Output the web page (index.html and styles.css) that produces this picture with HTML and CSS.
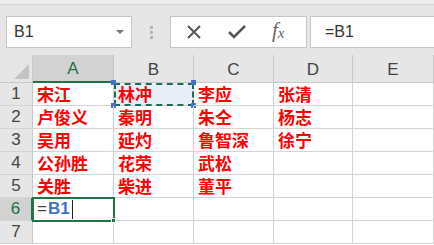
FILE: index.html
```html
<!DOCTYPE html>
<html>
<head>
 <meta charset="utf-8" />
 <title>Sheet</title>
 <link rel="stylesheet" href="styles.css">
</head>
<body>
 <div class="toolbar">
  <div class="namebox">
   <span>B1</span>
   <span class="drop"></span>
  </div>
  <div class="grip"><i></i><i></i><i></i></div>
  <div class="buttons">
   <svg class="icon" width="18" height="18" viewBox="0 0 18 18"><path d="M3 3 L15 15 M15 3 L3 15" stroke="#555" stroke-width="2" fill="none"/></svg>
   <svg class="icon" width="20" height="18" viewBox="0 0 20 18"><path d="M2 9 L7 14 L18 3" stroke="#555" stroke-width="2.6" fill="none"/></svg>
   <span class="fx">f<sub>x</sub></span>
  </div>
  <div class="formula">=B1</div>
 </div>

 <div class="sheet">
  <div class="corner"><span></span></div>
  <div class="colhead active">A</div>
  <div class="colhead">B</div>
  <div class="colhead">C</div>
  <div class="colhead">D</div>
  <div class="colhead">E</div>

  <div class="rowhead">1</div>
  <div class="cell">宋江</div>
  <div class="cell copy">林冲<i class="h tl"></i><i class="h tr"></i><i class="h bl"></i><i class="h br"></i></div>
  <div class="cell">李应</div>
  <div class="cell">张清</div>
  <div class="cell"></div>

  <div class="rowhead">2</div>
  <div class="cell">卢俊义</div>
  <div class="cell">秦明</div>
  <div class="cell">朱仝</div>
  <div class="cell">杨志</div>
  <div class="cell"></div>

  <div class="rowhead">3</div>
  <div class="cell">吴用</div>
  <div class="cell">延灼</div>
  <div class="cell">鲁智深</div>
  <div class="cell">徐宁</div>
  <div class="cell"></div>

  <div class="rowhead">4</div>
  <div class="cell">公孙胜</div>
  <div class="cell">花荣</div>
  <div class="cell">武松</div>
  <div class="cell"></div>
  <div class="cell"></div>

  <div class="rowhead">5</div>
  <div class="cell">关胜</div>
  <div class="cell">柴进</div>
  <div class="cell">董平</div>
  <div class="cell"></div>
  <div class="cell"></div>

  <div class="rowhead active">6</div>
  <div class="cell edit"><span class="eq">=</span><span class="ref">B1</span><span class="caret"></span><i class="fill"></i></div>
  <div class="cell"></div>
  <div class="cell"></div>
  <div class="cell"></div>
  <div class="cell"></div>

  <div class="rowhead">7</div>
  <div class="cell"></div>
  <div class="cell"></div>
  <div class="cell"></div>
  <div class="cell"></div>
  <div class="cell"></div>
 </div>
</body>
</html>
```

FILE: styles.css
```css
* {
 box-sizing: border-box;
}
body {
 margin: 0;
 width: 434px;
 height: 245px;
 overflow: hidden;
 background: #fff;
 font-family: "Liberation Sans", Arial, sans-serif;
}
.toolbar {
 height: 55px;
 background: #e6e6e6;
 border-top: 4px solid #eeeeee;
 display: flex;
 align-items: flex-start;
 padding-top: 12px;
 position: relative;
}
.toolbar::before {
 content: "";
 position: absolute;
 left: 0;
 right: 0;
 top: 0;
 height: 1px;
 background: #d2d2d2;
}
.namebox {
 margin-left: 6px;
 width: 126px;
 height: 32px;
 background: #fff;
 border: 1px solid #c6c6c6;
 display: flex;
 align-items: center;
 justify-content: space-between;
 padding: 0 7px 0 7px;
 font-size: 16px;
 color: #333;
}
.drop {
 width: 0;
 height: 0;
 border-left: 4px solid transparent;
 border-right: 4px solid transparent;
 border-top: 4px solid #777;
}
.grip {
 width: 38px;
 height: 32px;
 display: flex;
 flex-direction: column;
 align-items: center;
 justify-content: center;
 gap: 2px;
}
.grip i {
 width: 3px;
 height: 3px;
 background: #b5b5b5;
}
.buttons {
 width: 137px;
 height: 32px;
 background: #fff;
 border: 1px solid #c6c6c6;
 display: flex;
 align-items: center;
 padding-left: 14px;
 gap: 24px;
}
.icon {
 display: block;
}
.fx {
 font-family: "Liberation Serif", serif;
 font-style: italic;
 font-size: 21px;
 color: #666;
 margin-left: 1px;
 margin-top: -3px;
}
.fx sub {
 font-size: 15px;
 vertical-align: -1px;
}
.formula {
 margin-left: 3px;
 flex: 1;
 height: 32px;
 background: #fff;
 border: 1px solid #c6c6c6;
 border-right: none;
 padding-left: 14px;
 display: flex;
 align-items: center;
 font-size: 16px;
 color: #333;
}
.sheet {
 display: grid;
 grid-template-columns: 33px 81px 80px 80px 79px 81px;
 grid-template-rows: 28px repeat(7, 23px);
}
.corner {
 background: #e6e6e6;
 border-right: 1px solid #c8c8c8;
 border-bottom: 1px solid #c8c8c8;
 position: relative;
}
.corner span {
 position: absolute;
 right: 3px;
 bottom: 3px;
 width: 0;
 height: 0;
 border-left: 15px solid transparent;
 border-bottom: 15px solid #c3c3c3;
}
.colhead {
 background: #e6e6e6;
 border-right: 1px solid #c8c8c8;
 border-bottom: 1px solid #c8c8c8;
 display: flex;
 align-items: flex-end;
 justify-content: center;
 padding-bottom: 2px;
 font-size: 17px;
 color: #444;
}
.colhead.active {
 background: #d2d2d2;
 border-bottom: 2px solid #217346;
 color: #217346;
}
.rowhead {
 background: #e6e6e6;
 border-right: 1px solid #c8c8c8;
 border-bottom: 1px solid #d4d4d4;
 display: flex;
 align-items: center;
 justify-content: center;
 font-size: 17px;
 color: #444;
}
.rowhead.active {
 background: #d2d2d2;
 border-right: 2px solid #217346;
 color: #217346;
}
.cell {
 border-right: 1px solid #d4d4d4;
 border-bottom: 1px solid #d4d4d4;
 font-family: "Noto Sans CJK SC", sans-serif;
 font-weight: bold;
 font-size: 17px;
 line-height: 22px;
 color: #ff0000;
 padding-left: 4px;
 white-space: nowrap;
 position: relative;
}
.copy {
 background: #e8eef8;
 outline: 2px dashed #1f6b52;
 outline-offset: -2px;
}
.h {
 position: absolute;
 width: 5px;
 height: 5px;
 background: #4472c4;
}
.tl { left: -3px; top: -3px; }
.tr { right: -3px; top: -3px; }
.bl { left: -3px; bottom: -3px; }
.br { right: -3px; bottom: -3px; }
.edit {
 outline: 2px solid #217346;
 outline-offset: -1px;
 font-family: "Liberation Sans", Arial, sans-serif;
 font-weight: normal;
 display: flex;
 align-items: center;
 padding-left: 4px;
 z-index: 1;
}
.eq {
 color: #444;
 font-size: 17px;
}
.ref {
 color: #4472c4;
 font-weight: bold;
 font-size: 17px;
 margin-left: 1px;
}
.caret {
 width: 1px;
 height: 19px;
 background: #222;
 margin-left: 2px;
}
.fill {
 position: absolute;
 right: -3px;
 bottom: -3px;
 width: 5px;
 height: 5px;
 background: #217346;
 border: 1px solid #fff;
}
```
